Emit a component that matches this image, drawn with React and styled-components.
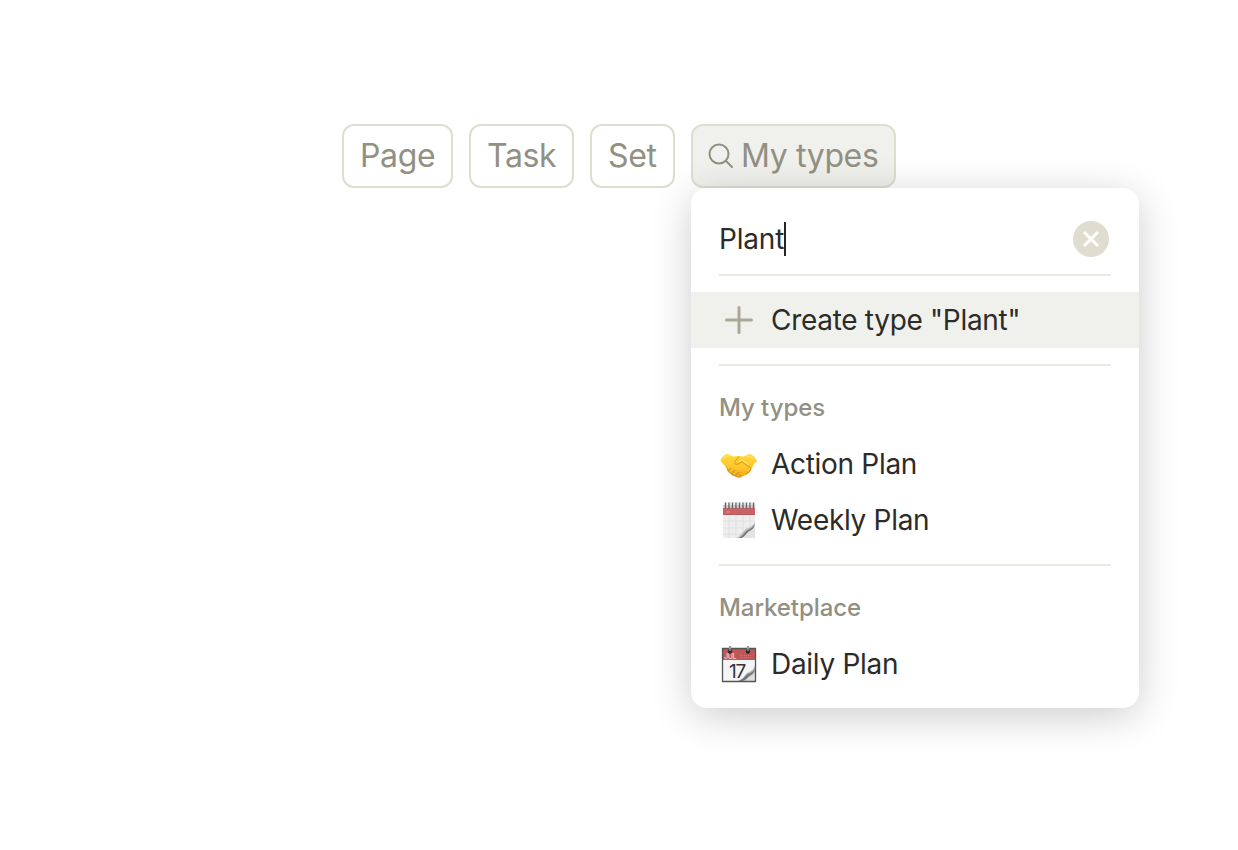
import React from "react";
import styled, { createGlobalStyle } from "styled-components";

const GlobalStyle = createGlobalStyle`
  * { box-sizing: border-box; }
  body {
    margin: 0;
    background: #fff;
    font-family: Inter, "Liberation Sans", sans-serif;
    -webkit-font-smoothing: antialiased;
  }
`;

const Page = styled.main`
  min-height: 850px;
  padding: 124px 0 0 342px;
  overflow: hidden;
`;

const TypeBar = styled.nav`
  display: flex;
  gap: 16px;
`;

const Anchor = styled.div`
  position: relative;
`;

const TypeButton = styled.button`
  display: flex;
  align-items: center;
  gap: 7px;
  width: ${(p) => p.$width}px;
  height: 64px;
  padding: 0 0 0 ${(p) => (p.$active ? 15 : 16)}px;
  border: 2px solid #dfddd0;
  border-radius: 12px;
  background: ${(p) => (p.$active ? "#f0f1ed" : "#fff")};
  color: #929082;
  font: 370 32px/44px Inter, "Liberation Sans", sans-serif;
  letter-spacing: -0.35px;
  white-space: nowrap;
`;

const Menu = styled.section`
  position: absolute;
  top: 64px;
  left: 0;
  width: 448px;
  height: 520px;
  padding: 16px 0;
  border-radius: 16px;
  background: #fff;
  box-shadow: 0 8px 40px rgba(0, 0, 0, 0.2);
`;

const SearchRow = styled.div`
  display: flex;
  align-items: center;
  height: 70px;
  padding: 0 30px 0 28px;
`;

const Query = styled.span`
  color: #2c2b27;
  font-size: 28px;
  font-weight: 370;
  line-height: 44px;
  letter-spacing: -0.2px;
`;

const Caret = styled.i`
  width: 2px;
  height: 34px;
  margin-left: -0.5px;
  background: #252525;
`;

const ClearButton = styled.button`
  display: flex;
  width: 36px;
  height: 36px;
  margin-left: auto;
  padding: 0;
  border: 0;
  border-radius: 50%;
  background: #dfddd0;
`;

const Divider = styled.hr`
  height: 2px;
  margin: ${(p) => (p.$first ? "0 28px 16px" : "16px 28px 0")};
  border: 0;
  background: #ebeae0;
`;

const Item = styled.div`
  display: flex;
  align-items: center;
  gap: 12px;
  height: 56px;
  padding-left: 28px;
  background: ${(p) => (p.$active ? "#f0f1ed" : "transparent")};
  color: #2c2b27;
  font-size: 28px;
  font-weight: 370;
  line-height: 44px;
  letter-spacing: -0.3px;
  white-space: nowrap;
`;

const ItemIcon = styled.svg`
  display: block;
  flex: none;
  width: 40px;
  height: 40px;
`;

const SectionLabel = styled.h2`
  height: 70px;
  margin: 0;
  padding: 24px 28px 0;
  color: #929082;
  font-size: 24px;
  font-weight: 500;
  line-height: 36px;
  letter-spacing: -0.06px;
`;

const SearchIcon = () => (
  <svg width="26" height="28" viewBox="0 0 26 28" fill="none" stroke="#929082" strokeWidth="2" strokeLinecap="round">
    <circle cx="11" cy="12" r="9.5" />
    <path d="M18 19l6 6" />
  </svg>
);

const ClearIcon = () => (
  <svg width="36" height="36" viewBox="0 0 36 36" stroke="#fff" strokeWidth="3">
    <path d="M11 11l14 14M25 11L11 25" />
  </svg>
);

const PlusIcon = () => (
  <ItemIcon viewBox="0 0 40 40" stroke="#aaa794" strokeWidth="3" strokeLinecap="round">
    <path d="M20 7.5v25M7.5 20h25" />
  </ItemIcon>
);

const HandshakeIcon = () => (
  <ItemIcon viewBox="0 0 40 40">
    <defs>
      <linearGradient id="skin" x1="0" y1="0" x2="0" y2="1">
        <stop offset="0" stopColor="#ffda3b" />
        <stop offset="0.6" stopColor="#fdc52b" />
        <stop offset="1" stopColor="#eba51c" />
      </linearGradient>
    </defs>
    <path d="M2 15C4 12 7 9.500 9 10L14 12.500 19 12 25 12.500 30 10C33 10 36 13 38 17C38 18 37 18 35.500 19L32 26 30 29 27 31 24 32 22 33.500 19 33.500 17 32 14 32 12 30 9 28 7 23 2.500 18C1.500 17 1.500 16 2 15Z" fill="url(#skin)" />
    <path d="M7 22C9 24 8 27 11 29l3 2 5 2c2 0 3-1 2-3M32 25c-1 3-3 4-5 5" fill="none" stroke="#d99418" strokeWidth="1" />
    <path d="M20 12.500l-4 5c-1 2 1 4 4 2l3-2 9 7" fill="none" stroke="#dfa01d" strokeWidth="1.100" />
    <path d="M9 27l3-3M12 30l4-4M16 32l4-4" fill="none" stroke="#d99418" strokeWidth="1.100" />
    <path d="M5 14c2-2 4-3 6-2M28 12.500c3-1 5 1 6 3M20 18l3-2 7 5" fill="none" stroke="#ffe55c" strokeWidth="1.500" />
  </ItemIcon>
);

const SpiralCalendarIcon = () => (
  <ItemIcon viewBox="0 0 40 40">
    <path d="M4 5h32v33H4z" fill="#eeeeee" />
    <path d="M4 5h32v4H4z" fill="#dcc9c9" />
    <path d="M4 8h32v7H4z" fill="#c86266" />
    <path d="M4 14.500h32" stroke="#b95a5e" />
    <path d="M4 21h32M4 28h32M4 34h20M10 15v23M17 15v23M24 15v20M31 15v14" stroke="#e0e0e0" strokeWidth="1" />
    <path d="M7 12h4" stroke="#df9292" />
    <path d="M22 38c5-3 6-5 8-7 3-1 5-3 6-5v12z" fill="#e3e3e3" />
    <path d="M17 38c5-2 6-6 10-9 4-2 7-3 9-7 0 4-2 7-5 9-4 2-5 6-9 7z" fill="#bdbdbd" />
    <path d="M20 38c5-3 5-5 9-8 3-1 5-3 7-6-1 4-3 6-6 7-3 2-4 6-8 7z" fill="#717171" />
    {[6.5, 10, 13.5, 17, 20.5, 24, 27.5, 31, 34.5].map((x) => (
      <g key={x}>
        <path d={`M${x} 2.500v6`} stroke="#62676c" strokeWidth="1.500" />
        <path d={`M${x + 1.2} 2.500v4`} stroke="#c9cdd0" strokeWidth="0.900" />
      </g>
    ))}
  </ItemIcon>
);

const Numeral = styled.text`
  font: 400 19px Inter, sans-serif;
  letter-spacing: -1.2px;
  fill: #333;
`;

const Month = styled.text`
  font: 600 7px Inter, sans-serif;
  fill: #efc4c0;
`;

const DateCalendarIcon = () => (
  <ItemIcon viewBox="0 0 40 40">
    <path d="M4 4h32v33H4z" fill="#f5f5f5" />
    <path d="M4 4h32v12H4z" fill="#bd5858" />
    <Month x="5" y="14.500">JUL</Month>
    <path d="M21 11.500h12M21 13.500h12" stroke="#cf7e7b" strokeWidth="0.800" strokeDasharray="1 1" />
    <Numeral x="10" y="33.500">17</Numeral>
    <path d="M23 37c5-2 6-4 8-6 2-1 4-2 5-4v10z" fill="#dedede" />
    <path d="M19 37c5-2 6-5 9-8 3-1 6-3 8-7v6c-2 3-5 4-7 6-2 2-4 3-7 3z" fill="#b5b5b5" />
    <path d="M20 37c5-2 6-5 9-7 3-1 5-2 7-5-1 4-3 5-6 7-2 2-4 5-8 5z" fill="#727272" />
    <path d="M3.500 4.500h33v33h-33z" fill="none" stroke="#555" strokeWidth="1.300" />
    {[11, 29].map((x) => (
      <g key={x}>
        <circle cx={x} cy="7.500" r="2.200" fill="#33282a" />
        <path d={`M${x} 2v5`} stroke="#65747a" strokeWidth="2.200" />
        <path d={`M${x} 2v3`} stroke="#d7e0e2" strokeWidth="0.800" />
      </g>
    ))}
  </ItemIcon>
);

export default function App() {
  return (
    <Page>
      <GlobalStyle />
      <TypeBar>
        <TypeButton $width={111}>Page</TypeButton>
        <TypeButton $width={105}>Task</TypeButton>
        <TypeButton $width={85}>Set</TypeButton>
        <Anchor>
          <TypeButton $width={205} $active>
            <SearchIcon />
            <span>My types</span>
          </TypeButton>
          <Menu>
            <SearchRow>
              <Query>Plant</Query>
              <Caret />
              <ClearButton aria-label="Clear"><ClearIcon /></ClearButton>
            </SearchRow>
            <Divider $first />
            <Item $active><PlusIcon /><span>Create type "Plant"</span></Item>
            <Divider />
            <SectionLabel>My types</SectionLabel>
            <Item><HandshakeIcon /><span>Action Plan</span></Item>
            <Item><SpiralCalendarIcon /><span>Weekly Plan</span></Item>
            <Divider />
            <SectionLabel>Marketplace</SectionLabel>
            <Item><DateCalendarIcon /><span>Daily Plan</span></Item>
          </Menu>
        </Anchor>
      </TypeBar>
    </Page>
  );
}
